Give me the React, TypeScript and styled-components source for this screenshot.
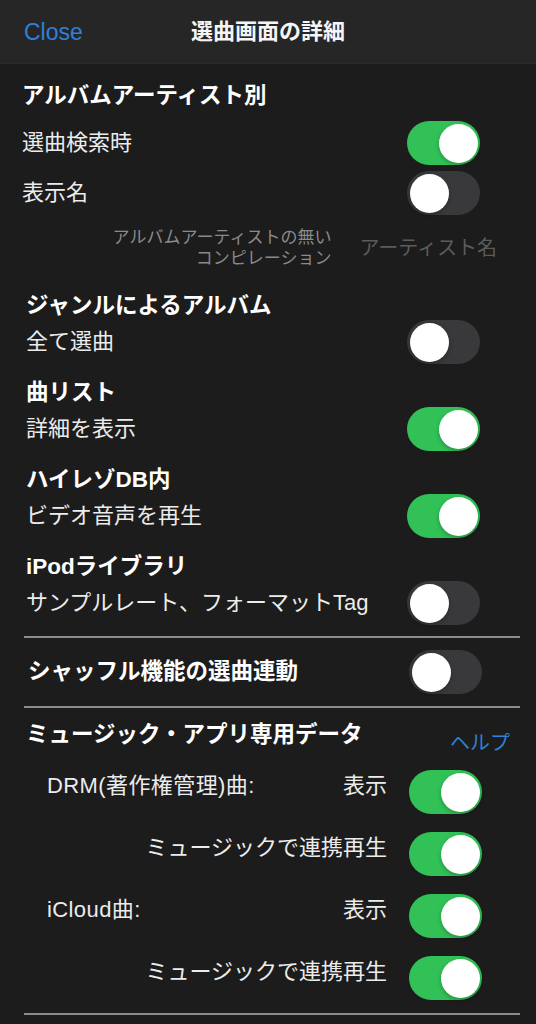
import React from "react";
import styled, { createGlobalStyle } from "styled-components";

const Global = createGlobalStyle`
  html, body { margin: 0; padding: 0; background: #1c1c1c; }
  body {
    font-family: "Liberation Sans", "Noto Sans CJK JP", sans-serif;
    color: #ececec;
    -webkit-font-smoothing: antialiased;
  }
`;

const Page = styled.div`
  width: 536px;
  min-height: 1024px;
  background: #1c1c1c;
`;

const Header = styled.header`
  height: 63px;
  display: grid;
  grid-template-columns: 1fr auto 1fr;
  align-items: center;
  background: #262626;
  border-bottom: 1px solid #2a2a2a;
`;

const CloseButton = styled.button`
  justify-self: start;
  background: none;
  border: 0;
  padding: 0 0 0 24px;
  color: #2f80d8;
  font-family: "Liberation Sans", "Noto Sans CJK JP", sans-serif;
  font-size: 23px;
  line-height: 30px;
  cursor: pointer;
`;

const Title = styled.h1`
  margin: 0;
  font-size: 22px;
  font-weight: 700;
  color: #f5f5f5;
  line-height: 30px;
`;

const Content = styled.main`
  padding: 0 16px 0 22px;
`;

const Group = styled.section<{ $indent: number; $top: number; $right?: number }>`
  margin-top: ${(p) => p.$top}px;
  padding-left: ${(p) => p.$indent}px;
  padding-right: ${(p) => p.$right ?? 40}px;
`;

const GroupTitle = styled.h2<{ $lh?: number }>`
  margin: 0;
  font-size: 22.5px;
  font-weight: 700;
  color: #ffffff;
  line-height: ${(p) => p.$lh ?? 28}px;
  white-space: nowrap;
`;

const SettingRow = styled.div<{ $top?: number }>`
  display: flex;
  align-items: center;
  justify-content: space-between;
  height: 44px;
  margin-top: ${(p) => p.$top ?? 0}px;
`;

const Label = styled.span`
  font-size: 22px;
  line-height: 30px;
  color: #ececec;
  white-space: nowrap;
`;

const NoteRow = styled.div`
  display: flex;
  justify-content: flex-end;
  align-items: center;
  gap: 28px;
  margin-top: 12px;
  padding-right: 23px;
`;

const Note = styled.div`
  font-size: 17px;
  line-height: 21px;
  color: #8a8a8a;
  text-align: right;
`;

const NoteValue = styled.span`
  font-size: 20px;
  line-height: 28px;
  color: #5b5b5b;
`;

const Divider = styled.hr<{ $top: number }>`
  margin: ${(p) => p.$top}px 0 0 2px;
  border: 0;
  height: 2px;
  background: #8c8c8c;
`;

const ShuffleRow = styled(SettingRow)`
  padding-left: 6px;
  padding-right: 38px;
`;

const MusicHeader = styled.div`
  display: flex;
  justify-content: space-between;
  align-items: flex-start;
  margin-top: 12px;
  padding-left: 4px;
  padding-right: 10px;
`;

const HelpLink = styled.a`
  margin-top: 10px;
  font-size: 20px;
  line-height: 26px;
  color: #2f80d8;
  text-decoration: none;
  cursor: pointer;
`;

const SubList = styled.div`
  display: flex;
  flex-direction: column;
  gap: 18px;
  margin-top: 14px;
`;

const SubRow = styled.div`
  display: flex;
  align-items: flex-start;
  height: 44px;
  padding-left: 25px;
  padding-right: 38px;
`;

const SubLabel = styled.span`
  flex: 1;
  font-size: 22px;
  line-height: 32px;
  color: #ececec;
  white-space: nowrap;
  letter-spacing: 0.4px;
`;

const SubCaption = styled.span`
  margin-right: 22px;
  font-size: 22px;
  line-height: 32px;
  color: #ececec;
  white-space: nowrap;
`;

const Track = styled.button<{ $on: boolean }>`
  flex: none;
  width: 73px;
  height: 44px;
  border: 0;
  border-radius: 22px;
  padding: 2.5px;
  display: flex;
  justify-content: ${(p) => (p.$on ? "flex-end" : "flex-start")};
  align-items: center;
  background: ${(p) => (p.$on ? "#31c157" : "#39393c")};
  cursor: pointer;
`;

const Thumb = styled.span`
  width: 39px;
  height: 39px;
  border-radius: 50%;
  background: #ffffff;
  box-shadow: 0 2px 4px rgba(0, 0, 0, 0.25);
`;

const Toggle: React.FC<{ on?: boolean }> = ({ on = false }) => (
  <Track $on={on} aria-pressed={on}>
    <Thumb />
  </Track>
);

const groups = [
  { title: "ジャンルによるアルバム", label: "全て選曲", on: false, top: 23 },
  { title: "曲リスト", label: "詳細を表示", on: true, top: 15 },
  { title: "ハイレゾDB内", label: "ビデオ音声を再生", on: true, top: 15 },
  { title: "iPodライブラリ", label: "サンプルレート、フォーマットTag", on: false, top: 15 },
];

export default function App() {
  return (
    <Page>
      <Global />
      <Header>
        <CloseButton>Close</CloseButton>
        <Title>選曲画面の詳細</Title>
        <span />
      </Header>
      <Content>
        <Group $indent={0} $top={18}>
          <GroupTitle>アルバムアーティスト別</GroupTitle>
          <SettingRow $top={11}>
            <Label>選曲検索時</Label>
            <Toggle on />
          </SettingRow>
          <SettingRow $top={6}>
            <Label>表示名</Label>
            <Toggle />
          </SettingRow>
        </Group>
        <NoteRow>
          <Note>
            アルバムアーティストの無い
            <br />
            コンピレーション
          </Note>
          <NoteValue>アーティスト名</NoteValue>
        </NoteRow>

        {groups.map((g) => (
          <Group key={g.title} $indent={4} $top={g.top}>
            <GroupTitle>{g.title}</GroupTitle>
            <SettingRow>
              <Label>{g.label}</Label>
              <Toggle on={g.on} />
            </SettingRow>
          </Group>
        ))}

        <Divider $top={11} />
        <ShuffleRow $top={12}>
          <GroupTitle $lh={30}>シャッフル機能の選曲連動</GroupTitle>
          <Toggle />
        </ShuffleRow>
        <Divider $top={12} />

        <MusicHeader>
          <GroupTitle $lh={30}>ミュージック・アプリ専用データ</GroupTitle>
          <HelpLink>ヘルプ</HelpLink>
        </MusicHeader>
        <SubList>
          <SubRow>
            <SubLabel>DRM(著作権管理)曲:</SubLabel>
            <SubCaption>表示</SubCaption>
            <Toggle on />
          </SubRow>
          <SubRow>
            <SubLabel />
            <SubCaption>ミュージックで連携再生</SubCaption>
            <Toggle on />
          </SubRow>
          <SubRow>
            <SubLabel>iCloud曲:</SubLabel>
            <SubCaption>表示</SubCaption>
            <Toggle on />
          </SubRow>
          <SubRow>
            <SubLabel />
            <SubCaption>ミュージックで連携再生</SubCaption>
            <Toggle on />
          </SubRow>
        </SubList>
        <Divider $top={13} />
      </Content>
    </Page>
  );
}
